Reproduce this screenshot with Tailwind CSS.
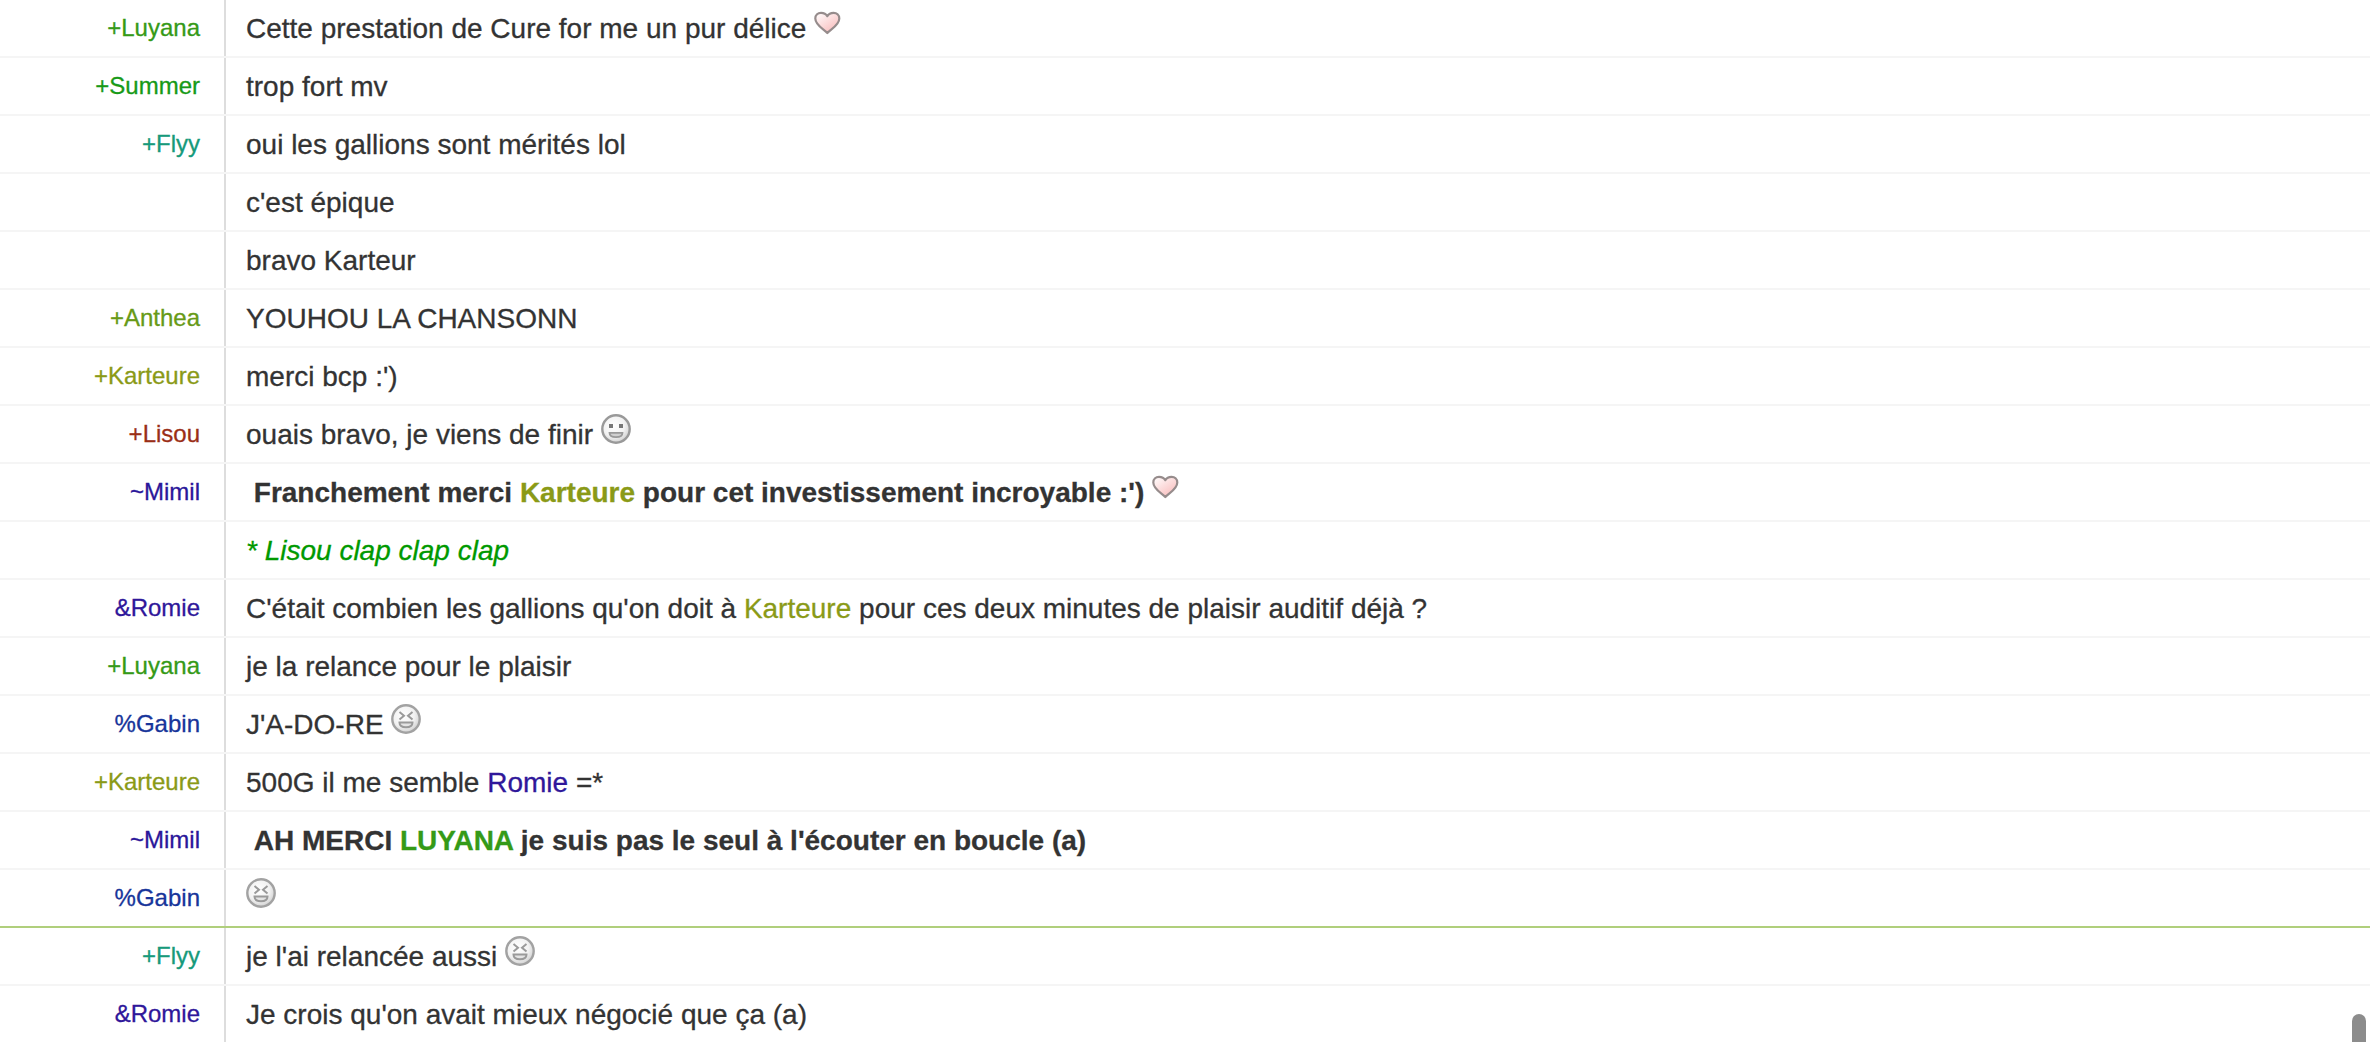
<!DOCTYPE html>
<html lang="fr">
<head>
    <meta charset="UTF-8">
    <meta name="viewport" content="width=device-width, initial-scale=1.0">
    <title>Chat</title>
    <script src="https://cdn.jsdelivr.net/npm/@tailwindcss/browser@4"></script>
    <style>
        body {
            font-family: "Liberation Sans", Arial, sans-serif;
            -webkit-text-stroke: 0.3px;
        }
    </style>
</head>
<body class="relative h-screen overflow-hidden bg-white text-[#333]">
    <!-- Shared smileys -->
    <svg class="absolute size-0">
        <defs>
            <radialGradient id="face" cx="0.42" cy="0.38" r="0.65">
                <stop offset="0" stop-color="#ffffff"/>
                <stop offset="0.6" stop-color="#f2f2f2"/>
                <stop offset="1" stop-color="#cfcfcf"/>
            </radialGradient>
            <linearGradient id="pink" x1="0" y1="0" x2="0.8" y2="1">
                <stop offset="0.1" stop-color="#fff8f8"/>
                <stop offset="0.8" stop-color="#fac8c8"/>
            </linearGradient>
            <symbol id="heart" viewBox="0 0 30 30">
                <path d="M13.300 25C10.500 21.500 1.300 17.500 1.300 10.500C1.300 6.800 4 4.800 7 4.800C9.800 4.800 12.200 6.200 13.300 8.200C14.400 6.200 16.800 4.800 19.600 4.800C22.600 4.800 25.300 6.800 25.300 10.500C25.300 17.500 16.100 21.500 13.300 25Z" fill="url(#pink)" stroke="#968c8c" stroke-width="2.200" stroke-linejoin="round"/>
            </symbol>
            <symbol id="smile" viewBox="0 0 30 30">
                <circle cx="15" cy="15" r="13.700" fill="url(#face)" stroke="#999" stroke-width="2.400"/>
                <rect x="8" y="10" width="4" height="4" fill="#777"/>
                <rect x="18" y="10" width="4" height="4" fill="#777"/>
                <path d="M8.500 18.800H21.500C21.500 22 19 23.200 15 23.200S8.500 22 8.500 18.800Z" fill="#d0d0d0" stroke="#999" stroke-width="1.800"/>
            </symbol>
            <symbol id="laugh" viewBox="0 0 30 30">
                <circle cx="15" cy="15" r="13.700" fill="url(#face)" stroke="#a2a2a2" stroke-width="2.400"/>
                <path d="M8.500 8L13 11.700L8.500 15.500M21.500 8L17 11.700L21.500 15.500" fill="none" stroke="#9a9a9a" stroke-width="2"/>
                <path d="M8.500 18.500H21.500C21.500 22 19 23.300 15 23.300S8.500 22 8.500 18.500Z" fill="#e4e4e4" stroke="#9a9a9a" stroke-width="2"/>
            </symbol>
        </defs>
    </svg>

    <ul class="text-[28px] leading-[58px] whitespace-nowrap">
        <li class="flex h-[58px] border-b-2 border-[#f5f5f5]">
            <span class="w-[224px] pr-6 text-right text-[24px] leading-[55px] text-[#359a17]">+Luyana</span>
            <p class="flex-1 border-l-2 border-[#ddd] pl-5">Cette prestation de Cure for me un pur délice <svg class="inline-block size-[30px] align-baseline"><use href="#heart"/></svg></p>
        </li>
        <li class="flex h-[58px] border-b-2 border-[#f5f5f5]">
            <span class="w-[224px] pr-6 text-right text-[24px] leading-[55px] text-[#179a17]">+Summer</span>
            <p class="flex-1 border-l-2 border-[#ddd] pl-5">trop fort mv</p>
        </li>
        <li class="flex h-[58px] border-b-2 border-[#f5f5f5]">
            <span class="w-[224px] pr-6 text-right text-[24px] leading-[55px] text-[#179a7b]">+Flyy</span>
            <p class="flex-1 border-l-2 border-[#ddd] pl-5">oui les gallions sont mérités lol</p>
        </li>
        <li class="flex h-[58px] border-b-2 border-[#f5f5f5]">
            <span class="w-[224px]"></span>
            <p class="flex-1 border-l-2 border-[#ddd] pl-5">c'est épique</p>
        </li>
        <li class="flex h-[58px] border-b-2 border-[#f5f5f5]">
            <span class="w-[224px]"></span>
            <p class="flex-1 border-l-2 border-[#ddd] pl-5">bravo Karteur</p>
        </li>
        <li class="flex h-[58px] border-b-2 border-[#f5f5f5]">
            <span class="w-[224px] pr-6 text-right text-[24px] leading-[55px] text-[#679a17]">+Anthea</span>
            <p class="flex-1 border-l-2 border-[#ddd] pl-5">YOUHOU LA CHANSONN</p>
        </li>
        <li class="flex h-[58px] border-b-2 border-[#f5f5f5]">
            <span class="w-[224px] pr-6 text-right text-[24px] leading-[55px] text-[#8a9a17]">+Karteure</span>
            <p class="flex-1 border-l-2 border-[#ddd] pl-5">merci bcp :')</p>
        </li>
        <li class="flex h-[58px] border-b-2 border-[#f5f5f5]">
            <span class="w-[224px] pr-6 text-right text-[24px] leading-[55px] text-[#9a2e17]">+Lisou</span>
            <p class="flex-1 border-l-2 border-[#ddd] pl-5">ouais bravo, je viens de finir <svg class="inline-block size-[30px] align-baseline"><use href="#smile"/></svg></p>
        </li>
        <li class="flex h-[58px] border-b-2 border-[#f5f5f5]">
            <span class="w-[224px] pr-6 text-right text-[24px] leading-[55px] text-[#2b179a]">~Mimil</span>
            <p class="flex-1 border-l-2 border-[#ddd] pl-5 font-bold">&nbsp;Franchement merci <span class="text-[#8a9a17]">Karteure</span> pour cet investissement incroyable :') <svg class="inline-block size-[30px] align-baseline"><use href="#heart"/></svg></p>
        </li>
        <li class="flex h-[58px] border-b-2 border-[#f5f5f5]">
            <span class="w-[224px]"></span>
            <p class="flex-1 border-l-2 border-[#ddd] pl-5"><em class="text-[#090]">* Lisou clap clap clap</em></p>
        </li>
        <li class="flex h-[58px] border-b-2 border-[#f5f5f5]">
            <span class="w-[224px] pr-6 text-right text-[24px] leading-[55px] text-[#2f179a]">&amp;Romie</span>
            <p class="flex-1 border-l-2 border-[#ddd] pl-5">C'était combien les gallions qu'on doit à <span class="text-[#8a9a17]">Karteure</span> pour ces deux minutes de plaisir auditif déjà ?</p>
        </li>
        <li class="flex h-[58px] border-b-2 border-[#f5f5f5]">
            <span class="w-[224px] pr-6 text-right text-[24px] leading-[55px] text-[#359a17]">+Luyana</span>
            <p class="flex-1 border-l-2 border-[#ddd] pl-5">je la relance pour le plaisir</p>
        </li>
        <li class="flex h-[58px] border-b-2 border-[#f5f5f5]">
            <span class="w-[224px] pr-6 text-right text-[24px] leading-[55px] text-[#17359a]">%Gabin</span>
            <p class="flex-1 border-l-2 border-[#ddd] pl-5">J'A-DO-RE <svg class="inline-block size-[30px] align-baseline"><use href="#laugh"/></svg></p>
        </li>
        <li class="flex h-[58px] border-b-2 border-[#f5f5f5]">
            <span class="w-[224px] pr-6 text-right text-[24px] leading-[55px] text-[#8a9a17]">+Karteure</span>
            <p class="flex-1 border-l-2 border-[#ddd] pl-5">500G il me semble <span class="text-[#2f179a]">Romie</span> =*</p>
        </li>
        <li class="flex h-[58px] border-b-2 border-[#f5f5f5]">
            <span class="w-[224px] pr-6 text-right text-[24px] leading-[55px] text-[#2b179a]">~Mimil</span>
            <p class="flex-1 border-l-2 border-[#ddd] pl-5 font-bold">&nbsp;AH MERCI <span class="text-[#359a17]">LUYANA</span> je suis pas le seul à l'écouter en boucle (a)</p>
        </li>
        <!-- Last message read -->
        <li class="flex h-[58px] border-b-2 border-[#b0cf7c]">
            <span class="w-[224px] pr-6 text-right text-[24px] leading-[55px] text-[#17359a]">%Gabin</span>
            <p class="flex-1 border-l-2 border-[#ddd] pl-5"><svg class="inline-block size-[30px] align-baseline"><use href="#laugh"/></svg></p>
        </li>
        <li class="flex h-[58px] border-b-2 border-[#f5f5f5]">
            <span class="w-[224px] pr-6 text-right text-[24px] leading-[55px] text-[#179a7b]">+Flyy</span>
            <p class="flex-1 border-l-2 border-[#ddd] pl-5">je l'ai relancée aussi <svg class="inline-block size-[30px] align-baseline"><use href="#laugh"/></svg></p>
        </li>
        <li class="flex h-[58px] border-b-2 border-[#f5f5f5]">
            <span class="w-[224px] pr-6 text-right text-[24px] leading-[55px] text-[#2f179a]">&amp;Romie</span>
            <p class="flex-1 border-l-2 border-[#ddd] pl-5">Je crois qu'on avait mieux négocié que ça (a)</p>
        </li>
    </ul>

    <!-- Scrollbar thumb -->
    <div class="absolute right-[4px] bottom-0 h-[28px] w-[14px] rounded-t-full bg-[#8c8c8c]"></div>
</body>
</html>
